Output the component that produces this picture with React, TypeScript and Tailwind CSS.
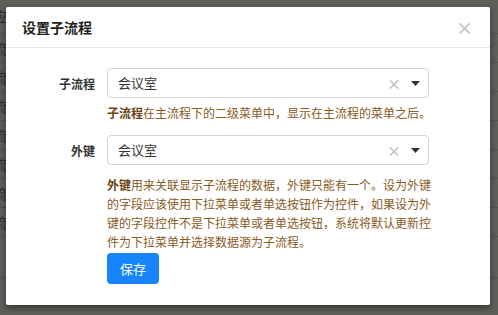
import React from "react";

const font = { fontFamily: '"Noto Sans CJK SC", "Noto Sans", sans-serif' };

// rows of the page that sits behind the dialog overlay
const pageRows = ["应", "流", "流", "流", "流", "流", "流", "流", ""];

function Select({ value }: { value: string }) {
  return (
    <div className="flex h-[30px] w-[322px] items-center rounded-[4px] border border-[#d4d4d4] bg-white pl-[10px] pr-[8px]">
      <span className="flex-1 text-[13px] text-[#333]">{value}</span>
      <span className="mr-[10px] text-[14px] font-bold leading-none text-[#c4c4c4]">×</span>
      <svg width="9" height="5" viewBox="0 0 9 5">
        <path d="M0 0h9L4.5 5z" fill="#333" />
      </svg>
    </div>
  );
}

export default function App() {
  return (
    <div className="relative h-[315px] w-[498px] overflow-hidden bg-[#5f5f59]" style={font}>
      {/* dimmed page behind */}
      <div className="flex flex-col">
        {pageRows.map((t, i) => (
          <div
            key={i}
            className={`flex items-center border-b border-[#4f4f4b] ${i === 0 ? "h-[34px]" : i === 8 ? "h-[41px]" : "h-[29px]"}`}
          >
            <span className="-ml-[7px] text-[14px] text-[#27323d]">{t}</span>
          </div>
        ))}
      </div>

      {/* dialog */}
      <div className="absolute left-[6px] top-[7px] flex h-[298px] w-[484px] flex-col rounded-[2px] bg-white shadow-[0_3px_6px_rgba(0,0,0,0.45)]">
        <div className="flex h-[41px] items-center justify-between border-b border-[#e5e5e5] pl-[16px] pr-[17px]">
          <span className="text-[14px] font-semibold text-[#222]">设置子流程</span>
          <span className="text-[17px] font-bold leading-none text-[#c8c8c8]">×</span>
        </div>

        <div className="flex flex-col pt-[20px]">
          <div className="flex items-start gap-[12px]">
            <label className="w-[89px] pt-[7px] text-right text-[12px] font-bold text-[#333]">子流程</label>
            <div className="flex flex-col">
              <Select value="会议室" />
              <p className="mt-[6px] w-[328px] text-[12px] leading-[18px] text-[#8a5a1e]">
                <b className="text-[#6b4310]">子流程</b>在主流程下的二级菜单中，显示在主流程的菜单之后。
              </p>
            </div>
          </div>

          <div className="mt-[13px] flex items-start gap-[12px]">
            <label className="w-[89px] pt-[7px] text-right text-[12px] font-bold text-[#333]">外键</label>
            <div className="flex flex-col">
              <Select value="会议室" />
              <p className="mt-[10px] w-[328px] text-[12px] leading-[19px] text-[#8a5a1e]">
                <b className="text-[#6b4310]">外键</b>用来关联显示子流程的数据，外键只能有一个。设为外键的字段应该使用下拉菜单或者单选按钮作为控件，如果设为外键的字段控件不是下拉菜单或者单选按钮，系统将默认更新控件为下拉菜单并选择数据源为子流程。
              </p>
              <button className="mt-[2px] h-[31px] w-[52px] rounded-[4px] bg-[#1685fb] text-[13px] text-white">
                保存
              </button>
            </div>
          </div>
        </div>
      </div>
    </div>
  );
}
